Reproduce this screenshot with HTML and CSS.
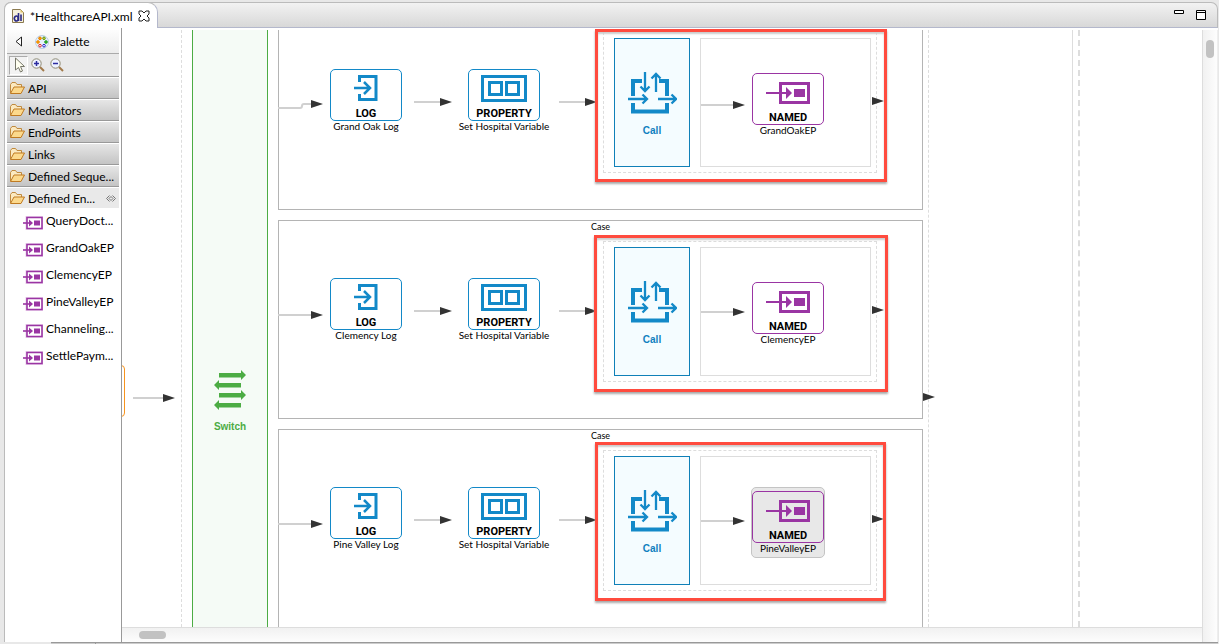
FILE: index.html
```
<!DOCTYPE html>
<html lang="en">
<head>
<meta charset="utf-8">
<title>HealthcareAPI.xml</title>
<link rel="stylesheet" href="styles.css">
</head>
<body>
<svg class="defs" aria-hidden="true">
  <defs>
    <symbol id="folder" viewBox="0 0 16 14"><path d="M1.5 12V3.5L3 1.5h3.500l1.500 2h4.500V6" fill="#fbe9c0" stroke="#c08a3e"/><path d="M1.500 12.500L5 6h10.500l-3.500 6.500z" fill="#fcd98c" stroke="#bf7a22"/></symbol>
    <symbol id="endpoint" viewBox="0 0 20 14"><path d="M4 1h15v12H4z" fill="#fff" stroke="#ead0ec" stroke-width="3"/><path d="M4 1.500h15v11H4z" fill="#fff" stroke="#9a35a3" stroke-width="1.600"/><path d="M0 7h8" stroke="#9a35a3" stroke-width="1.600"/><path d="M6 3.500L10 7l-4 3.500z" fill="#9a35a3"/><path d="M11 4.500h6v5h-6z" fill="#9a35a3"/></symbol>
    <symbol id="log" viewBox="0 0 24 26"><path d="M5.500 7V1.500H22v23H5.500V19" fill="none" stroke="#1389c8" stroke-width="3"/><path d="M0 13h16M10 7l6 6-6 6" fill="none" stroke="#1389c8" stroke-width="2.500"/></symbol>
    <symbol id="property" viewBox="0 0 46 27"><path d="M1.500 1.500h43v24h-43zM8.500 7.500h12v12h-12zM25.500 7.500h12v12h-12z" fill="none" stroke="#1389c8" stroke-width="3"/></symbol>
    <symbol id="call" viewBox="-1 0 50 42"><g fill="none" stroke="#1389c8"><path d="M14 9H5v15M5 31v8.500h34V31M31 9h8v15" stroke-width="4"/><path d="M17 0v18M12.500 14.500L17 19l4.500-4.500M28 20V2M23.500 6.500L28 2l4.500 4.500M0 27h19M14.500 22.500L19 27l-4.500 4.500M30 27h18M43.500 22.500L48 27l-4.500 4.500" stroke-width="2.300"/></g></symbol>
    <symbol id="named" viewBox="0 0 44 22"><path d="M14.500 1.500h28v19h-28z" fill="none" stroke="#9a35a3" stroke-width="3"/><path d="M0 11h22" stroke="#9a35a3" stroke-width="2"/><path d="M20 5l6 6-6 6z" fill="#9a35a3"/><path d="M28 7h11v8H28z" fill="#9a35a3"/></symbol>
    <symbol id="head" viewBox="0 0 12 8" overflow="visible"><path d="M0 0l12 4-12 4z" fill="#333"/></symbol>
  </defs>
</svg>

<main class="editor">
  <header class="tabs">
    <div class="tab">
      <svg class="i-file" viewBox="0 0 12 14"><path d="M.500.500h8l3 3v10H.500z" fill="#f6f0dc" stroke="#8b7a50"/><path d="M8.500.500v3h3z" fill="#e3c56c"/><path d="M6 8a2 2.500 0 1 0 0 3zM6.500 4v8M9 5.500v6.500" fill="none" stroke="#2b2b86" stroke-width="1.600"/></svg>
      <span>*HealthcareAPI.xml</span>
      <button class="plain" aria-label="Close tab"><svg class="i-close" viewBox="0 0 12 12"><path d="M1 1h3l2 2 2-2h3v3L9 6l2 2v3H8L6 9l-2 2H1V8l2-2-2-2z" fill="#fff" stroke="#222"/></svg></button>
    </div>
    <div class="window-buttons">
      <button class="plain" aria-label="Minimize"><svg class="i-win" viewBox="0 0 10 10"><path d="M.500.500h9v3h-9z" fill="#fff" stroke="#000"/></svg></button>
      <button class="plain" aria-label="Maximize"><svg class="i-win" viewBox="0 0 10 10"><path d="M.500.500h9v9h-9zM0 2.500h10" fill="#fff" stroke="#000"/></svg></button>
    </div>
  </header>

  <div class="work">
    <aside class="palette">
      <div class="palette-title">
        <button class="plain" aria-label="Hide palette"><svg class="i-back" viewBox="0 0 7 11"><path d="M6.500 1v9L1 5.500z" fill="#fff" stroke="#222"/></svg></button>
        <svg class="i-palette" viewBox="0 0 14 14"><circle cx="7" cy="7" r="6.500" fill="#e6f0fa" stroke="#b9cde2"/><g fill="#fff"><circle cx="5" cy="3.300" r="1.300" fill="#fa0" stroke="#e87a00"/><circle cx="9" cy="3.300" r="1.300" fill="#dc3" stroke="#5a9a20"/><circle cx="3" cy="7" r="1.300" fill="#fb0" stroke="#f08000"/><circle cx="11" cy="7" r="1.300" fill="#3b3" stroke="#292"/><circle cx="5" cy="10.700" r="1.300" stroke="#d22"/><circle cx="9" cy="10.700" r="1.300" stroke="#22c"/></g></svg>
        <span>Palette</span>
      </div>
      <div class="tools">
        <button class="tool active" aria-label="Select"><svg class="i-cursor" viewBox="0 0 12 16"><path d="M1.500 1v12l3-2.500 2 4.500 2-1-2-4.500h4z" fill="#fffff0" stroke="#77776a"/></svg></button>
        <button class="tool" aria-label="Zoom in"><svg class="i-zoom" viewBox="0 0 14 14"><path d="M9 9l4 4" stroke="#a1794a" stroke-width="2"/><circle cx="5.500" cy="5.500" r="4.700" fill="#eef2ff" stroke="#8f8a72"/><path d="M3 5.500h5M5.500 3v5" stroke="#2c2ca0" stroke-width="1.500"/></svg></button>
        <button class="tool" aria-label="Zoom out"><svg class="i-zoom" viewBox="0 0 14 14"><path d="M9 9l4 4" stroke="#a1794a" stroke-width="2"/><circle cx="5.500" cy="5.500" r="4.700" fill="#eef2ff" stroke="#8f8a72"/><path d="M3 5.500h5" stroke="#2c2ca0" stroke-width="1.500"/></svg></button>
      </div>
      <button class="drawer"><svg><use href="#folder"/></svg>API</button>
      <button class="drawer"><svg><use href="#folder"/></svg>Mediators</button>
      <button class="drawer"><svg><use href="#folder"/></svg>EndPoints</button>
      <button class="drawer"><svg><use href="#folder"/></svg>Links</button>
      <button class="drawer"><svg><use href="#folder"/></svg>Defined Seque...</button>
      <button class="drawer open"><svg><use href="#folder"/></svg>Defined En...<svg class="i-pin" viewBox="0 0 10 7"><path d="M3.500.500l-3 3 3 3M6.500.500l3 3-3 3M3 3.500l2-2 2 2-2 2z" fill="none" stroke="#777"/></svg></button>
      <div class="entries">
        <button class="entry"><svg><use href="#endpoint"/></svg>QueryDoct...</button>
        <button class="entry"><svg><use href="#endpoint"/></svg>GrandOakEP</button>
        <button class="entry"><svg><use href="#endpoint"/></svg>ClemencyEP</button>
        <button class="entry"><svg><use href="#endpoint"/></svg>PineValleyEP</button>
        <button class="entry"><svg><use href="#endpoint"/></svg>Channeling...</button>
        <button class="entry"><svg><use href="#endpoint"/></svg>SettlePaym...</button>
      </div>
    </aside>

    <section class="diagram">
      <div class="canvas">
        <div class="start"></div>
        <svg class="wire wire-in"><path d="M0 4h32"/><use href="#head" x="30" width="12" height="8"/></svg>
        <div class="guide guide-left"></div>
        <div class="guide guide-right"></div>
        <div class="edge"></div>
        <div class="guide guide-outer"></div>
        <div class="switch">
          <svg class="i-switch" viewBox="0 0 32 40"><path d="M5 3h22V0l5 5-5 5V7.500H5zM27 17.500H5V20l-5-5 5-5v3h22zM5 23h22v-3l5 5-5 5v-2.500H5zM27 37.500H5V40l-5-5 5-5v3h22z" fill="#4cac44"/></svg>
          <span>Switch</span>
        </div>

        <article class="case case-1">
          <svg class="wires"><path d="M0 97h22q2 0 2-2t2-2h8M136 91h28M281 91h28"/><use href="#head" x="33" y="89" width="12" height="8"/><use href="#head" x="162" y="87" width="12" height="8"/><use href="#head" x="307" y="87" width="12" height="8"/></svg>
          <div class="node blue log"><svg><use href="#log"/></svg><b>LOG</b><span>Grand Oak Log</span></div>
          <div class="node blue property"><svg><use href="#property"/></svg><b>PROPERTY</b><span>Set Hospital Variable</span></div>
          <div class="group"></div>
          <div class="call"><svg><use href="#call"/></svg><span>Call</span></div>
          <div class="target"></div>
          <div class="node purple named"><svg><use href="#named"/></svg><b>NAMED</b><span>GrandOakEP</span></div>
          <svg class="wires"><path d="M423 94h34"/><use href="#head" x="455" y="90" width="12" height="8"/><use href="#head" x="594" y="86" width="12" height="8"/></svg>
        </article>

        <article class="case case-2">
          <h2>Case</h2>
          <svg class="wires"><path d="M0 95h34M136 91h28M281 91h28"/><use href="#head" x="33" y="91" width="12" height="8"/><use href="#head" x="162" y="87" width="12" height="8"/><use href="#head" x="307" y="87" width="12" height="8"/></svg>
          <div class="node blue log"><svg><use href="#log"/></svg><b>LOG</b><span>Clemency Log</span></div>
          <div class="node blue property"><svg><use href="#property"/></svg><b>PROPERTY</b><span>Set Hospital Variable</span></div>
          <div class="group"></div>
          <div class="call"><svg><use href="#call"/></svg><span>Call</span></div>
          <div class="target"></div>
          <div class="node purple named"><svg><use href="#named"/></svg><b>NAMED</b><span>ClemencyEP</span></div>
          <svg class="wires"><path d="M423 92h34"/><use href="#head" x="455" y="88" width="12" height="8"/><use href="#head" x="594" y="86" width="12" height="8"/></svg>
        </article>

        <article class="case case-3">
          <h2>Case</h2>
          <svg class="wires"><path d="M0 95h34M136 91h28M281 91h28"/><use href="#head" x="33" y="91" width="12" height="8"/><use href="#head" x="162" y="87" width="12" height="8"/><use href="#head" x="307" y="87" width="12" height="8"/></svg>
          <div class="node blue log"><svg><use href="#log"/></svg><b>LOG</b><span>Pine Valley Log</span></div>
          <div class="node blue property"><svg><use href="#property"/></svg><b>PROPERTY</b><span>Set Hospital Variable</span></div>
          <div class="group"></div>
          <div class="call"><svg><use href="#call"/></svg><span>Call</span></div>
          <div class="target"></div>
          <div class="selection"></div>
          <div class="node purple named"><svg><use href="#named"/></svg><b>NAMED</b><span>PineValleyEP</span></div>
          <svg class="wires"><path d="M423 92h34"/><use href="#head" x="455" y="88" width="12" height="8"/><use href="#head" x="594" y="86" width="12" height="8"/></svg>
        </article>

        <svg class="wire wire-out"><use href="#head" width="12" height="8"/></svg>
      </div>
      <div class="vscroll"><div class="thumb"></div></div>
      <div class="hscroll"><div class="thumb"></div></div>
      <div class="mark mark-1"></div>
      <div class="mark mark-2"></div>
      <div class="mark mark-3"></div>
    </section>
  </div>
  <footer class="bottom-tabs"><div></div></footer>
</main>
</body>
</html>
```
FILE: styles.css
```
* { box-sizing: border-box; }
body { margin: 0; background: #e8e8e8; font-family: Lato, "Open Sans", sans-serif; font-size: 12px; color: #000; }
button { font: inherit; color: inherit; border: 0; padding: 0; background: none; text-align: left; }
svg { display: block; flex: none; }
.defs { position: absolute; width: 0; height: 0; }
.plain { display: flex; }

.editor { height: 100vh; padding: 2px 1px 0 4px; display: grid; grid-template-rows: 26px 1fr 2px; }
.tabs { display: flex; justify-content: space-between; background: linear-gradient(#f2f2f2, #d8d8d8); border: 1px solid #bbb; border-bottom-color: #b4b8cc; border-radius: 7px 7px 0 0; }
.tab { display: flex; align-items: center; gap: 6px; height: 26px; margin: -1px 0 0 -1px; padding: 1px 7px 0 7px; background: #fff; border: 1px solid #bbb; border-right-color: #b4b8cc; border-bottom: 0; border-radius: 7px 10px 0 0; }
.i-file { width: 12px; height: 14px; }
.i-close { width: 12px; height: 12px; }
.i-win { width: 10px; height: 10px; }
.window-buttons { display: flex; gap: 12px; padding: 7px 11px 0 0; }

.work { display: grid; grid-template-columns: 117px 1fr; min-height: 0; background: #fff; border-left: 1px solid #bbb; }
.palette { padding: 2px 2px 0; border-right: 1px solid #999; display: flex; flex-direction: column; }
.palette-title { display: flex; align-items: center; height: 24px; padding-left: 8px; background: linear-gradient(#fdfdfd, #ececec); border-bottom: 1px solid #aaa; }
.i-back { width: 7px; height: 11px; margin-right: 13px; }
.i-palette { width: 14px; height: 14px; margin-right: 4px; }
.tools { display: flex; align-items: center; gap: 1px; height: 23px; padding-left: 2px; background: #e9e9e9; border-bottom: 1px solid #999; }
.tool { display: flex; justify-content: center; align-items: center; width: 18px; height: 19px; border: 1px solid transparent; }
.tool.active { width: 19px; padding-left: 3px; background: #f3f3f3; border-color: #aaa #fff #fff #aaa; }
.i-cursor { width: 12px; height: 16px; }
.i-zoom { width: 14px; height: 14px; }
.drawer { display: flex; align-items: center; gap: 3px; height: 22px; padding-left: 2px; background: linear-gradient(#e6e6e6, #c4c4c4); border-top: 1px solid #fff; border-bottom: 1px solid #999; white-space: nowrap; }
.drawer svg { width: 16px; height: 14px; }
.drawer.open { background: #e9e9e9; border-bottom: 0; height: 21px; }
.drawer .i-pin { width: 10px; height: 7px; margin: 0 3px 0 auto; }
.entries { display: flex; flex-direction: column; padding: 0 0 0 16px; }
.entry { display: flex; align-items: center; gap: 3px; height: 27px; padding-bottom: 2px; white-space: nowrap; }
.entry svg { width: 20px; height: 14px; margin-top: 5px; }

.diagram { position: relative; display: grid; grid-template-columns: 1fr 16px; grid-template-rows: 1fr 15px; padding-top: 2px; min-width: 0; }
.canvas { position: relative; overflow: hidden; background: #fff; }
.vscroll { grid-row: 1 / 3; grid-column: 2; border-left: 1px solid #ddd; border-right: 1px solid #eee; background: linear-gradient(90deg, #f1f1f1, #fdfdfd); padding: 10px 3px; }
.vscroll .thumb { width: 8px; height: 18px; border-radius: 4px; background: #c2c2c2; }
.hscroll { grid-row: 2; grid-column: 1; border-top: 1px solid #ddd; background: linear-gradient(#f1f1f1, #fdfdfd); padding: 3px 17px; }
.hscroll .thumb { width: 27px; height: 8px; border-radius: 4px; background: #c2c2c2; }
.bottom-tabs { display: flex; margin-left: 47px; background: #ccc; border-top: 1px solid #999; }
.bottom-tabs div { width: 45px; border-right: 1px solid #999; }

.start { position: absolute; left: -60px; top: 335px; width: 63px; height: 52px; border: 1px solid #f7941e; border-radius: 4px; }
.wire, .wires { position: absolute; fill: none; stroke-width: 2; }
.wire > path, .wires > path { stroke: #d0d0d0; }
.wires { left: -1px; top: -1px; width: 100%; height: 100%; }
.wire { width: 44px; height: 8px; }
.wire-in { left: 11px; top: 364px; }
.wire-out { left: 801px; top: 363px; }
.guide { position: absolute; top: 0; bottom: 0; border-left: 1px dashed #ddd; }
.guide-left { left: 59px; }
.guide-right { left: 806px; }
.guide-outer { left: 956px; border-left-width: 2px; }
.edge { position: absolute; left: 950px; top: 0; bottom: 0; border-left: 1px solid #ddd; }
.switch { position: absolute; left: 70px; top: 0; bottom: 0; width: 76px; padding-top: 340px; border: solid #4cac44; border-width: 0 1px; background: #f5fbf6; display: flex; flex-direction: column; align-items: center; gap: 11px; font: bold 10px/12px "Liberation Sans", Arial, sans-serif; color: #4cac44; }
.i-switch { width: 32px; height: 40px; }

.case { position: absolute; left: 156px; width: 645px; height: 199px; background: #fff; border: 1px solid #b4b4b4; font-size: 10px; line-height: 12px; }
.case-1 { top: -19px; }
.case-2 { top: 190px; }
.case-3 { top: 399px; }
.case h2 { margin: 0; font-weight: normal; font-size: 9px; line-height: 11px; text-align: center; }
.node { position: absolute; width: 72px; height: 52px; border: 1px solid; border-radius: 5px; display: flex; flex-direction: column; align-items: center; }
.node b { margin-top: auto; font: bold 11px/13px Roboto, sans-serif; }
.node span { height: 0; white-space: nowrap; color: #000; }
.blue { border-color: #1389c8; background: #fff; }
.purple { border-color: #9a35a3; }
.blue svg { margin-top: 5px; }
.log { left: 51px; top: 57px; }
.log svg { width: 24px; height: 26px; }
.property { left: 189px; top: 57px; }
.property svg { width: 46px; height: 27px; }
.named { left: 473px; top: 61px; }
.named svg { width: 44px; height: 22px; margin-top: 8px; }
.group { position: absolute; left: 324px; top: 20px; width: 274px; height: 141px; border: 1px dashed #ddd; }
.call { position: absolute; left: 335px; top: 26px; width: 76px; height: 129px; padding-top: 33px; border: 1px solid #0f80b8; background: #f4fcff; display: flex; flex-direction: column; align-items: center; gap: 11px; font: bold 10px/12px "Liberation Sans", Arial, sans-serif; color: #0f80c0; }
.call svg { width: 50px; height: 42px; }
.target { position: absolute; left: 421px; top: 26px; width: 171px; height: 129px; border: 1px solid #ddd; }
.selection { position: absolute; left: 472px; top: 57px; width: 74px; height: 71px; border: 1px solid #c4c4c4; border-radius: 5px; background: #e8e8e8; }
.mark { position: absolute; border: 3px solid #ff4b3e; box-shadow: 0 2px 2px #aaa, inset 0 2px 2px #ccc; }
.mark-1 { left: 473px; top: 1px; width: 292px; height: 153px; }
.mark-2 { left: 472px; top: 207px; width: 294px; height: 157px; }
.mark-3 { left: 473px; top: 414px; width: 291px; height: 159px; }
```
